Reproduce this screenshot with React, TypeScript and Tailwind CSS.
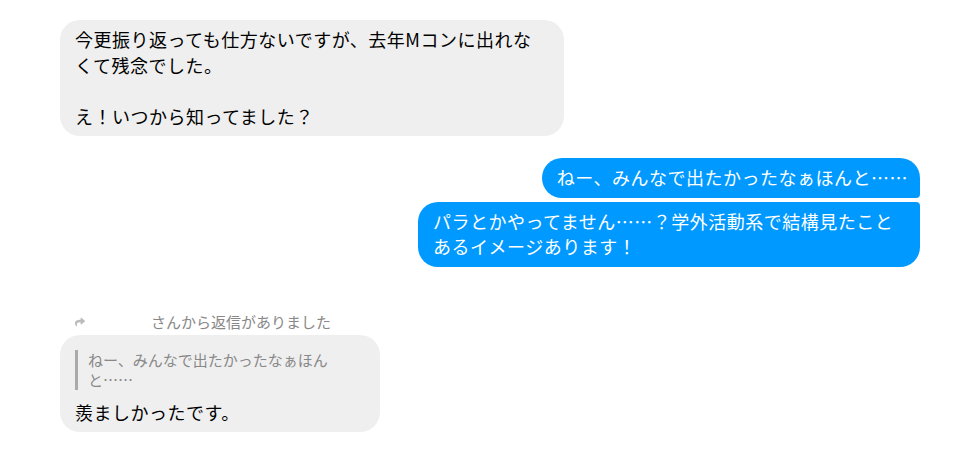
import { FaShare } from 'react-icons/fa';

const font = { fontFamily: '"Noto Sans CJK JP", "Noto Sans", sans-serif' };

export default function App() {
  return (
    <div
      className="w-[958px] h-[452px] bg-white pt-[20px] pl-[60px] pr-[38px] text-[18px] leading-[25.5px] tracking-[0.5px] text-black"
      style={font}
    >
      {/* received */}
      <div className="flex justify-start">
        <div className="w-[504px] rounded-[20px] bg-[#efefef] px-[15px] py-[7px] whitespace-pre-wrap">
          {'今更振り返っても仕方ないですが、去年Mコンに出れな\nくて残念でした。\n\nえ！いつから知ってました？'}
        </div>
      </div>

      {/* sent */}
      <div className="mt-[22px] flex flex-col items-end gap-[4px]">
        <div className="rounded-[20px] rounded-br-[4px] bg-[#0099ff] pl-[15px] pr-[12px] py-[7px] text-white whitespace-nowrap">
          ねー、みんなで出たかったなぁほんと……
        </div>
        <div className="w-[502px] rounded-[20px] rounded-tr-[4px] bg-[#0099ff] px-[15px] py-[7px] text-white whitespace-pre-wrap">
          {'パラとかやってません……？学外活動系で結構見たこと\nあるイメージあります！'}
        </div>
      </div>

      {/* reply */}
      <div className="mt-[45px] tracking-normal">
        <div className="flex items-center pl-[15px] text-[15px] leading-[20px] text-[#888]">
          <FaShare className="w-[10px] h-[10px] text-[#bbb]" />
          <span className="ml-[66px]">さんから返信がありました</span>
        </div>
        <div className="mt-[3px] w-[320px] rounded-[20px] bg-[#efefef] px-[15px] pt-[15px] pb-[7px]">
          <div className="border-l-[3px] border-[#aaa] pl-[10px] pr-[30px] text-[15px] leading-[20px] text-[#888]">
            ねー、みんなで出たかったなぁほんと……
          </div>
          <div className="mt-[10px] tracking-[0.5px]">羨ましかったです。</div>
        </div>
      </div>
    </div>
  );
}
